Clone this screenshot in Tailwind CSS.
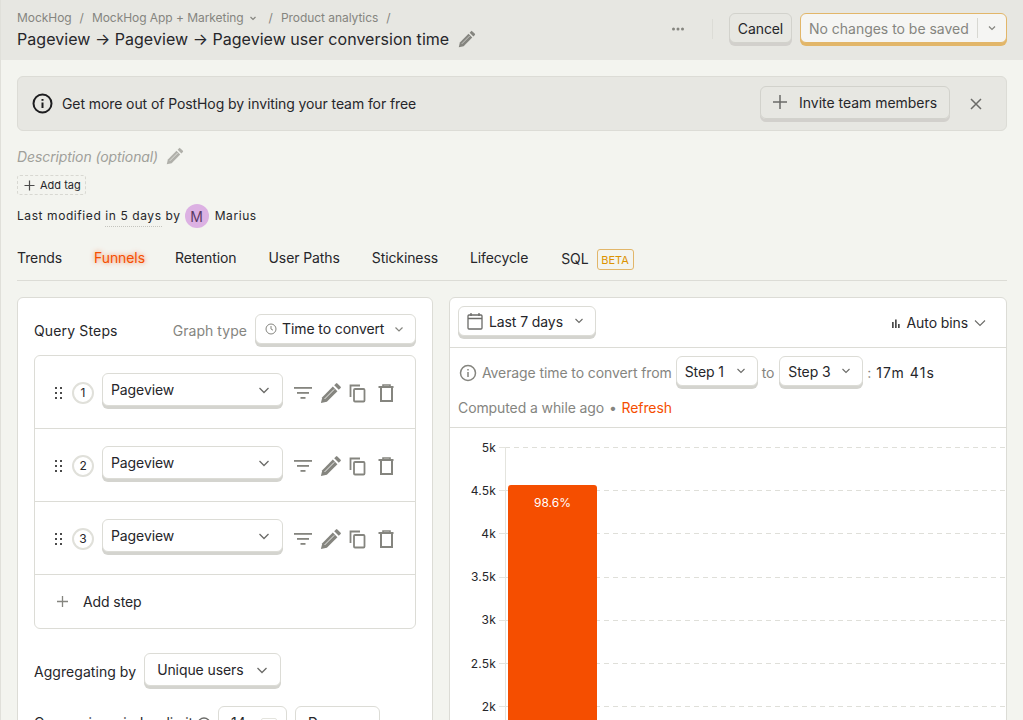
<!DOCTYPE html>
<html lang="en">
<head>
<meta charset="UTF-8" />
<meta name="viewport" content="width=device-width, initial-scale=1.0" />
<script src="https://cdn.jsdelivr.net/npm/@tailwindcss/browser@4"></script>
</head>
<body class="bg-[#f3f4ef] font-['Inter',sans-serif] text-[#26262a]">
<div class="h-[720px] w-[1023px] overflow-hidden border-l border-[#e0e0da]">

  <!-- Top bar -->
  <header class="h-[60px] bg-[#e7e7e2] pl-4 pr-4 flex items-center justify-between">
    <div class="flex flex-col">
      <div class="flex items-center text-[12px] leading-4 text-[#85857f] h-4 tracking-[-0.05px]">
        <span>MockHog</span><span class="mx-2">/</span>
        <span>MockHog App + Marketing</span>
        <svg class="ml-[3px] mr-[10px] w-3 h-3" viewBox="0 0 12 12" fill="none" stroke="#85857f" stroke-width="1.2"><path d="M3.5 5l2.5 2.5L8.500 5"/></svg>
        <span class="mr-2">/</span><span>Product analytics</span><span class="ml-2">/</span>
      </div>
      <div class="flex items-center mt-[1px] h-6 text-[16px] whitespace-nowrap tracking-[0.04px]">
        <span>Pageview → Pageview → Pageview user conversion time</span>
        <svg class="ml-[9px] w-[18px] h-[18px]" viewBox="0 0 24 24" fill="#85857f"><path d="M1 23l1.500-6.500L14 5l5 5L7.500 21.500z"/><path d="M15.500 3.500L17.500 1.500a1 1 0 0 1 1.400 0l3.600 3.600a1 1 0 0 1 0 1.400L20.500 8.500z"/><path d="M5 18.500L15.500 8" stroke="#e7e7e2" stroke-width="0.9"/></svg>
      </div>
    </div>
    <div class="flex items-center">
      <svg class="w-4 h-4 mr-[26px] -mt-[2px]" viewBox="0 0 16 16" fill="#85857f"><circle cx="3.500" cy="8" r="1.500"/><circle cx="8" cy="8" r="1.500"/><circle cx="12.500" cy="8" r="1.500"/></svg>
      <div class="w-px h-[20px] bg-[#dcdcd6] mr-4 -mt-[2px]"></div>
      <button class="h-[30px] w-[63px] mr-2 bg-[#e7e7e2] border border-[#d2d2cc] rounded-md shadow-[0_3px_0_#d2d0cc] text-[14px] tracking-[-0.1px] -mt-[4px]">Cancel</button>
      <div class="h-[30px] w-[207px] bg-[#f5f5f3] border border-[#e2b669] rounded-md shadow-[0_3px_0_#e2b669] flex items-center text-[14px] text-[#85857f] -mt-[4px]">
        <span class="pl-2 pr-2 tracking-[-0.02px] whitespace-nowrap">No changes to be saved</span>
        <span class="w-px h-[20px] bg-[#d8d8d2]"></span>
        <svg class="ml-2 w-3 h-3" viewBox="0 0 12 12" fill="none" stroke="#85857f" stroke-width="1.2"><path d="M3 4.500l3 3 3-3"/></svg>
      </div>
    </div>
  </header>

  <main class="pl-4 pr-4 pt-4">
    <!-- Invite banner -->
    <div class="h-[55px] bg-[#e7e7e2] border border-[#dcdcd6] rounded-md flex items-center pl-[14px] pr-[22px]">
      <svg class="w-[21px] h-[21px]" viewBox="0 0 21 21" fill="none" stroke="#1d1d1f" stroke-width="2"><circle cx="10.500" cy="10.500" r="9"/><path d="M10.500 9.500v5.500"/><path d="M10.500 6v1.800"/></svg>
      <span class="ml-[9px] text-[14px] tracking-[-0.09px]">Get more out of PostHog by inviting your team for free</span>
      <button class="ml-auto h-[33px] w-[190px] border border-[#d2d2cc] rounded-md shadow-[0_3px_0_#d2d0cc] flex items-center text-[14px] -mt-[3px] pl-[11px]">
        <svg class="w-4 h-4 mr-[11px]" viewBox="0 0 16 16" fill="none" stroke="#6b6b68" stroke-width="1.500"><path d="M8 1v14M1 8h14"/></svg>
        <span class="tracking-[-0.02px]">Invite team members</span>
      </button>
      <svg class="ml-[18px] w-4 h-4" viewBox="0 0 16 16" fill="none" stroke="#6b6b68" stroke-width="1.500"><path d="M3 3l10 10M13 3L3 13"/></svg>
    </div>

    <!-- Description -->
    <div class="mt-[15px] h-[20px] flex items-center text-[14px] italic text-[#a0a09a] tracking-[-0.1px]">
      <span>Description (optional)</span>
      <svg class="ml-[8px] w-[18px] h-[18px]" viewBox="0 0 24 24" fill="#b0b0aa"><path d="M1 23l1.500-6.500L14 5l5 5L7.500 21.500z"/><path d="M15.500 3.500L17.500 1.500a1 1 0 0 1 1.400 0l3.600 3.600a1 1 0 0 1 0 1.400L20.500 8.500z"/><path d="M5 18.500L15.500 8" stroke="#f3f4ef" stroke-width="0.9"/></svg>
    </div>
    <div class="mt-[9px] h-[20px] w-[69px] border border-dashed border-[#d8d8d2] rounded-[3px] flex items-center text-[11px] pl-[6px]">
      <svg class="w-[11px] h-[11px] mr-[5px]" viewBox="0 0 11 11" fill="none" stroke="#4b4b4b" stroke-width="1.200"><path d="M5.500 0.500v10M0.500 5.500h10"/></svg>
      Add tag
    </div>
    <div class="mt-[9px] h-[24px] flex items-center text-[12px] tracking-[0.58px]">
      <span>Last modified</span>
      <span class="ml-[4px] border-b border-dotted border-[#c4c4be] leading-[16px] pt-[3px] pb-[2px]">in 5 days</span>
      <span class="ml-[4px]">by</span>
      <span class="ml-[4px] w-6 h-6 rounded-full bg-[#dcb1e3] flex items-center justify-center text-[14px] text-[#5a3a63] tracking-normal">M</span>
      <span class="ml-[6px]">Marius</span>
    </div>

    <!-- Tabs -->
    <nav class="mt-[11px] h-[42px] border-b border-[#dcdcd6] flex items-start pt-[8px] text-[14px] gap-8 tracking-[-0.1px]">
      <span class="leading-[22px]">Trends</span>
      <span class="leading-[22px] text-[#f54e00] -mr-[2px] [text-shadow:0_0_5px_rgba(245,78,0,0.7)]">Funnels</span>
      <span class="leading-[22px]">Retention</span>
      <span class="leading-[22px]">User Paths</span>
      <span class="leading-[22px]">Stickiness</span>
      <span class="leading-[22px]">Lifecycle</span>
      <span class="leading-[22px] ml-[1px] flex items-center">SQL
        <span class="ml-2 h-[21px] w-[37px] flex items-center justify-center border border-[#e2b669] rounded-[3px] text-[11px] text-[#dc9300] mt-[2px] tracking-normal">BETA</span>
      </span>
    </nav>

    <div class="mt-4 flex gap-4 items-start">
      <!-- Query panel -->
      <section class="w-[416px] h-[460px] shrink-0 bg-white border border-[#dcdcd6] rounded-md px-4 pt-4 tracking-[-0.1px]">
        <div class="flex items-center justify-between h-[33px]">
          <span class="text-[14px] tracking-[0.15px]">Query Steps</span>
          <div class="flex items-center">
            <span class="text-[14px] text-[#85857f] mr-2 tracking-[0.05px]">Graph type</span>
            <div class="h-[30px] w-[161px] bg-white border border-[#dcdcd6] rounded-md shadow-[0_3px_0_#d4d4cf] flex items-center text-[14px] pl-[9px] -mt-[4px]">
              <svg class="w-3 h-3 mr-[5px]" viewBox="0 0 12 12" fill="none" stroke="#85857f" stroke-width="1"><circle cx="6" cy="6" r="5"/><path d="M6 3v3l2 1.200"/></svg>
              <span>Time to convert</span>
              <svg class="ml-auto mr-[10px] w-3 h-3" viewBox="0 0 12 12" fill="none" stroke="#85857f" stroke-width="1.200"><path d="M2.500 4.500L6 8l3.500-3.500"/></svg>
            </div>
          </div>
        </div>

        <div class="mt-[8px] border border-[#dcdcd6] rounded-md">
          <!-- Step 1 -->
          <div class="h-[73px] flex items-center pl-[19px] border-b border-[#dcdcd6]">
            <svg class="w-[10px] h-[14px] mt-[2px]" viewBox="0 0 10 14" fill="#4b4b4b"><rect x="1" y="1" width="2" height="2"/><rect x="6" y="1" width="2" height="2"/><rect x="1" y="6" width="2" height="2"/><rect x="6" y="6" width="2" height="2"/><rect x="1" y="11" width="2" height="2"/><rect x="6" y="11" width="2" height="2"/></svg>
            <span class="ml-[8px] w-[22px] h-[22px] mt-[2px] rounded-full border-2 border-[#e0e0da] flex items-center justify-center text-[12px]">1</span>
            <div class="ml-2 h-[33px] w-[181px] bg-white border border-[#dcdcd6] rounded-md shadow-[0_3px_0_#d4d4cf] flex items-center text-[14px] pl-2 -mt-[5px]">
              <span>Pageview</span>
              <svg class="ml-auto mr-[11px] w-[14px] h-[14px]" viewBox="0 0 14 14" fill="none" stroke="#6b6b68" stroke-width="1.300"><path d="M2.500 5L7 9.500 11.500 5"/></svg>
            </div>
            <svg class="ml-[10px] w-5 h-5 mt-[2px]" viewBox="0 0 20 20" fill="#85857f"><rect x="1" y="4" width="18" height="1.800"/><rect x="4" y="9" width="12" height="1.800"/><rect x="7.500" y="14" width="5" height="1.800"/></svg>
            <svg class="ml-[7px] w-[22px] h-[22px] mt-[2px]" viewBox="0 0 24 24" fill="#85857f"><path d="M1 23l1.500-6.500L14 5l5 5L7.500 21.500z"/><path d="M15.500 3.500L17.500 1.500a1 1 0 0 1 1.400 0l3.600 3.600a1 1 0 0 1 0 1.400L20.500 8.500z"/><path d="M5 18.500L15.500 8" stroke="#ffffff" stroke-width="0.9"/></svg>
            <svg class="ml-[6px] w-5 h-5 mt-[2px]" viewBox="0 0 20 20" fill="none" stroke="#85857f" stroke-width="1.800"><path d="M2.500 14V2.500H12"/><rect x="6" y="6" width="10.500" height="12.500" rx="1"/></svg>
            <svg class="ml-[9px] w-5 h-5 mt-[2px]" viewBox="0 0 20 20" fill="none" stroke="#85857f" stroke-width="2"><path d="M1.500 4h15"/><path d="M6 4V2h7v2" stroke-width="1.600"/><path d="M4 4v14h11V4"/></svg>
          </div>
          <!-- Step 2 -->
          <div class="h-[73px] flex items-center pl-[19px] border-b border-[#dcdcd6]">
            <svg class="w-[10px] h-[14px] mt-[2px]" viewBox="0 0 10 14" fill="#4b4b4b"><rect x="1" y="1" width="2" height="2"/><rect x="6" y="1" width="2" height="2"/><rect x="1" y="6" width="2" height="2"/><rect x="6" y="6" width="2" height="2"/><rect x="1" y="11" width="2" height="2"/><rect x="6" y="11" width="2" height="2"/></svg>
            <span class="ml-[8px] w-[22px] h-[22px] mt-[2px] rounded-full border-2 border-[#e0e0da] flex items-center justify-center text-[12px]">2</span>
            <div class="ml-2 h-[33px] w-[181px] bg-white border border-[#dcdcd6] rounded-md shadow-[0_3px_0_#d4d4cf] flex items-center text-[14px] pl-2 -mt-[5px]">
              <span>Pageview</span>
              <svg class="ml-auto mr-[11px] w-[14px] h-[14px]" viewBox="0 0 14 14" fill="none" stroke="#6b6b68" stroke-width="1.300"><path d="M2.500 5L7 9.500 11.500 5"/></svg>
            </div>
            <svg class="ml-[10px] w-5 h-5 mt-[2px]" viewBox="0 0 20 20" fill="#85857f"><rect x="1" y="4" width="18" height="1.800"/><rect x="4" y="9" width="12" height="1.800"/><rect x="7.500" y="14" width="5" height="1.800"/></svg>
            <svg class="ml-[7px] w-[22px] h-[22px] mt-[2px]" viewBox="0 0 24 24" fill="#85857f"><path d="M1 23l1.500-6.500L14 5l5 5L7.500 21.500z"/><path d="M15.500 3.500L17.500 1.500a1 1 0 0 1 1.400 0l3.600 3.600a1 1 0 0 1 0 1.400L20.500 8.500z"/><path d="M5 18.500L15.500 8" stroke="#ffffff" stroke-width="0.9"/></svg>
            <svg class="ml-[6px] w-5 h-5 mt-[2px]" viewBox="0 0 20 20" fill="none" stroke="#85857f" stroke-width="1.800"><path d="M2.500 14V2.500H12"/><rect x="6" y="6" width="10.500" height="12.500" rx="1"/></svg>
            <svg class="ml-[9px] w-5 h-5 mt-[2px]" viewBox="0 0 20 20" fill="none" stroke="#85857f" stroke-width="2"><path d="M1.500 4h15"/><path d="M6 4V2h7v2" stroke-width="1.600"/><path d="M4 4v14h11V4"/></svg>
          </div>
          <!-- Step 3 -->
          <div class="h-[73px] flex items-center pl-[19px] border-b border-[#dcdcd6]">
            <svg class="w-[10px] h-[14px] mt-[2px]" viewBox="0 0 10 14" fill="#4b4b4b"><rect x="1" y="1" width="2" height="2"/><rect x="6" y="1" width="2" height="2"/><rect x="1" y="6" width="2" height="2"/><rect x="6" y="6" width="2" height="2"/><rect x="1" y="11" width="2" height="2"/><rect x="6" y="11" width="2" height="2"/></svg>
            <span class="ml-[8px] w-[22px] h-[22px] mt-[2px] rounded-full border-2 border-[#e0e0da] flex items-center justify-center text-[12px]">3</span>
            <div class="ml-2 h-[33px] w-[181px] bg-white border border-[#dcdcd6] rounded-md shadow-[0_3px_0_#d4d4cf] flex items-center text-[14px] pl-2 -mt-[5px]">
              <span>Pageview</span>
              <svg class="ml-auto mr-[11px] w-[14px] h-[14px]" viewBox="0 0 14 14" fill="none" stroke="#6b6b68" stroke-width="1.300"><path d="M2.500 5L7 9.500 11.500 5"/></svg>
            </div>
            <svg class="ml-[10px] w-5 h-5 mt-[2px]" viewBox="0 0 20 20" fill="#85857f"><rect x="1" y="4" width="18" height="1.800"/><rect x="4" y="9" width="12" height="1.800"/><rect x="7.500" y="14" width="5" height="1.800"/></svg>
            <svg class="ml-[7px] w-[22px] h-[22px] mt-[2px]" viewBox="0 0 24 24" fill="#85857f"><path d="M1 23l1.500-6.500L14 5l5 5L7.500 21.500z"/><path d="M15.500 3.500L17.500 1.500a1 1 0 0 1 1.400 0l3.600 3.600a1 1 0 0 1 0 1.400L20.500 8.500z"/><path d="M5 18.500L15.500 8" stroke="#ffffff" stroke-width="0.9"/></svg>
            <svg class="ml-[6px] w-5 h-5 mt-[2px]" viewBox="0 0 20 20" fill="none" stroke="#85857f" stroke-width="1.800"><path d="M2.500 14V2.500H12"/><rect x="6" y="6" width="10.500" height="12.500" rx="1"/></svg>
            <svg class="ml-[9px] w-5 h-5 mt-[2px]" viewBox="0 0 20 20" fill="none" stroke="#85857f" stroke-width="2"><path d="M1.500 4h15"/><path d="M6 4V2h7v2" stroke-width="1.600"/><path d="M4 4v14h11V4"/></svg>
          </div>
          <div class="h-[53px] flex items-center pl-[22px] text-[14px]">
            <svg class="w-[11px] h-[11px] mr-[15px]" viewBox="0 0 11 11" fill="none" stroke="#85857f" stroke-width="1.300"><path d="M5.500 0v11M0 5.500h11"/></svg>
            <span>Add step</span>
          </div>
        </div>

        <div class="mt-[24px] flex items-center">
          <span class="text-[14px] mt-[3px] tracking-[0.05px]">Aggregating by</span>
          <div class="ml-2 h-[33px] w-[137px] bg-white border border-[#dcdcd6] rounded-md shadow-[0_3px_0_#d4d4cf] flex items-center text-[14px] pl-3">
            <span>Unique users</span>
            <svg class="ml-auto mr-[11px] w-[14px] h-[14px]" viewBox="0 0 14 14" fill="none" stroke="#6b6b68" stroke-width="1.300"><path d="M2.500 5L7 9.500 11.500 5"/></svg>
          </div>
        </div>

        <div class="mt-[20px] flex items-start">
          <span class="text-[14px] mt-[7px] leading-[20px] whitespace-nowrap">Conversion window limit</span>
          <svg class="ml-1 mt-[11px] w-[14px] h-[14px]" viewBox="0 0 14 14" fill="none" stroke="#6b6b68" stroke-width="1.300"><circle cx="7" cy="7" r="6"/></svg>
          <div class="ml-[7px] h-[33px] w-[69px] bg-white border border-[#dcdcd6] rounded-md text-[14px] pl-3 pt-[7px] leading-[18px] flex items-start">
            <span>14</span>
            <span class="ml-auto mr-[9px] mt-[4px] w-[16px] h-[16px] border border-[#e4e4de] rounded-[2px]"></span>
          </div>
          <div class="ml-2 h-[33px] w-[85px] bg-white border border-[#dcdcd6] rounded-md text-[14px] pl-3 pt-[7px] leading-[18px]">Days</div>
        </div>
      </section>

      <!-- Chart panel -->
      <section class="w-[558px] h-[460px] bg-white border border-[#dcdcd6] rounded-md tracking-[-0.1px]">
        <div class="h-[50px] border-b border-[#dcdcd6] flex items-center pl-2 pr-[19px] justify-between">
          <div class="h-[30px] w-[138px] bg-white border border-[#dcdcd6] rounded-md shadow-[0_3px_0_#d4d4cf] flex items-center text-[14px] pl-2 -mt-[3px]">
            <svg class="w-[16px] h-[18px] mr-[6px]" viewBox="0 0 16 18" fill="none" stroke="#6b6b68" stroke-width="1.300"><rect x="1" y="3" width="14" height="14" rx="1"/><path d="M1 6.500h14M4 1v3M12 1v3"/></svg>
            <span>Last 7 days</span>
            <svg class="ml-auto mr-[10px] w-3 h-3" viewBox="0 0 12 12" fill="none" stroke="#6b6b68" stroke-width="1.100"><path d="M2.500 4L6 7.500 9.500 4"/></svg>
          </div>
          <div class="flex items-center text-[14px]">
            <svg class="w-[12px] h-[12px] mr-[5px]" viewBox="0 0 12 12" fill="#4b4b4b"><rect x="2" y="5" width="1.700" height="6"/><rect x="5" y="2.500" width="1.700" height="8.500"/><rect x="8" y="7" width="1.700" height="4"/></svg>
            <span>Auto bins</span>
            <svg class="ml-[5px] w-[14px] h-[14px]" viewBox="0 0 14 14" fill="none" stroke="#6b6b68" stroke-width="1.100"><path d="M2 4.500L7 9.500 12 4.500"/></svg>
          </div>
        </div>

        <div class="h-[80px] border-b border-[#dcdcd6] pl-2 text-[14px] text-[#85857f]">
          <div class="flex items-center h-[49px]">
            <svg class="w-[18px] h-[18px] ml-[1px] mr-[5px]" viewBox="0 0 18 18" fill="none" stroke="#85857f" stroke-width="1.500"><circle cx="9" cy="9" r="7.500"/><path d="M9 8v5M9 5v1.500"/></svg>
            <span>Average time to convert from</span>
            <div class="ml-1 h-[30px] w-[82px] bg-white border border-[#dcdcd6] rounded-md shadow-[0_3px_0_#d4d4cf] flex items-center text-[#26262a] pl-2 -mt-[3px]">
              <span>Step 1</span>
              <svg class="ml-auto mr-[10px] w-3 h-3" viewBox="0 0 12 12" fill="none" stroke="#6b6b68" stroke-width="1.100"><path d="M2.500 4L6 7.500 9.500 4"/></svg>
            </div>
            <span class="ml-1">to</span>
            <div class="ml-[5px] h-[30px] w-[84px] bg-white border border-[#dcdcd6] rounded-md shadow-[0_3px_0_#d4d4cf] flex items-center text-[#26262a] pl-2 -mt-[3px]">
              <span>Step 3</span>
              <svg class="ml-auto mr-[10px] w-3 h-3" viewBox="0 0 12 12" fill="none" stroke="#6b6b68" stroke-width="1.100"><path d="M2.500 4L6 7.500 9.500 4"/></svg>
            </div>
            <span class="ml-1">:</span>
            <span class="ml-[5px] text-[#26262a] tracking-[1.1px]">17m 41s</span>
          </div>
          <div class="leading-[18px] mt-[2px]">Computed a while ago <span class="mx-[1px]">•</span> <span class="text-[#f54e00]">Refresh</span></div>
        </div>

        <!-- Chart: gridlines are rows, the bar sits over them -->
        <div class="relative -mt-[2px] text-[12px] tracking-[0.2px]">
          <div class="absolute left-[55px] top-[21px] h-[300px] w-px bg-[#e4e4de]"></div>
          <div class="h-[43.200px] flex items-center"><span class="w-[46px] text-right">5k</span><span class="ml-[3px] w-[6px] border-t border-[#e4e4de]"></span><span class="flex-1 h-px bg-[repeating-linear-gradient(90deg,#dfdfd9_0_5px,transparent_5px_9px)]"></span></div>
          <div class="h-[43.200px] flex items-center"><span class="w-[46px] text-right">4.5k</span><span class="ml-[3px] w-[6px] border-t border-[#e4e4de]"></span><span class="flex-1 h-px bg-[repeating-linear-gradient(90deg,#dfdfd9_0_5px,transparent_5px_9px)]"></span></div>
          <div class="h-[43.200px] flex items-center"><span class="w-[46px] text-right">4k</span><span class="ml-[3px] w-[6px] border-t border-[#e4e4de]"></span><span class="flex-1 h-px bg-[repeating-linear-gradient(90deg,#dfdfd9_0_5px,transparent_5px_9px)]"></span></div>
          <div class="h-[43.200px] flex items-center"><span class="w-[46px] text-right">3.5k</span><span class="ml-[3px] w-[6px] border-t border-[#e4e4de]"></span><span class="flex-1 h-px bg-[repeating-linear-gradient(90deg,#dfdfd9_0_5px,transparent_5px_9px)]"></span></div>
          <div class="h-[43.200px] flex items-center"><span class="w-[46px] text-right">3k</span><span class="ml-[3px] w-[6px] border-t border-[#e4e4de]"></span><span class="flex-1 h-px bg-[repeating-linear-gradient(90deg,#dfdfd9_0_5px,transparent_5px_9px)]"></span></div>
          <div class="h-[43.200px] flex items-center"><span class="w-[46px] text-right">2.5k</span><span class="ml-[3px] w-[6px] border-t border-[#e4e4de]"></span><span class="flex-1 h-px bg-[repeating-linear-gradient(90deg,#dfdfd9_0_5px,transparent_5px_9px)]"></span></div>
          <div class="h-[43.200px] flex items-center"><span class="w-[46px] text-right">2k</span><span class="ml-[3px] w-[6px] border-t border-[#e4e4de]"></span><span class="flex-1 h-px bg-[repeating-linear-gradient(90deg,#dfdfd9_0_5px,transparent_5px_9px)]"></span></div>
          <div class="absolute left-[58px] top-[59px] w-[89px] h-[300px] bg-[#f54e00] rounded-t-[3px] text-white text-center pt-[10px] leading-[16px] tracking-normal">98.6%</div>
        </div>
      </section>
    </div>
  </main>
</div>
</body>
</html>
